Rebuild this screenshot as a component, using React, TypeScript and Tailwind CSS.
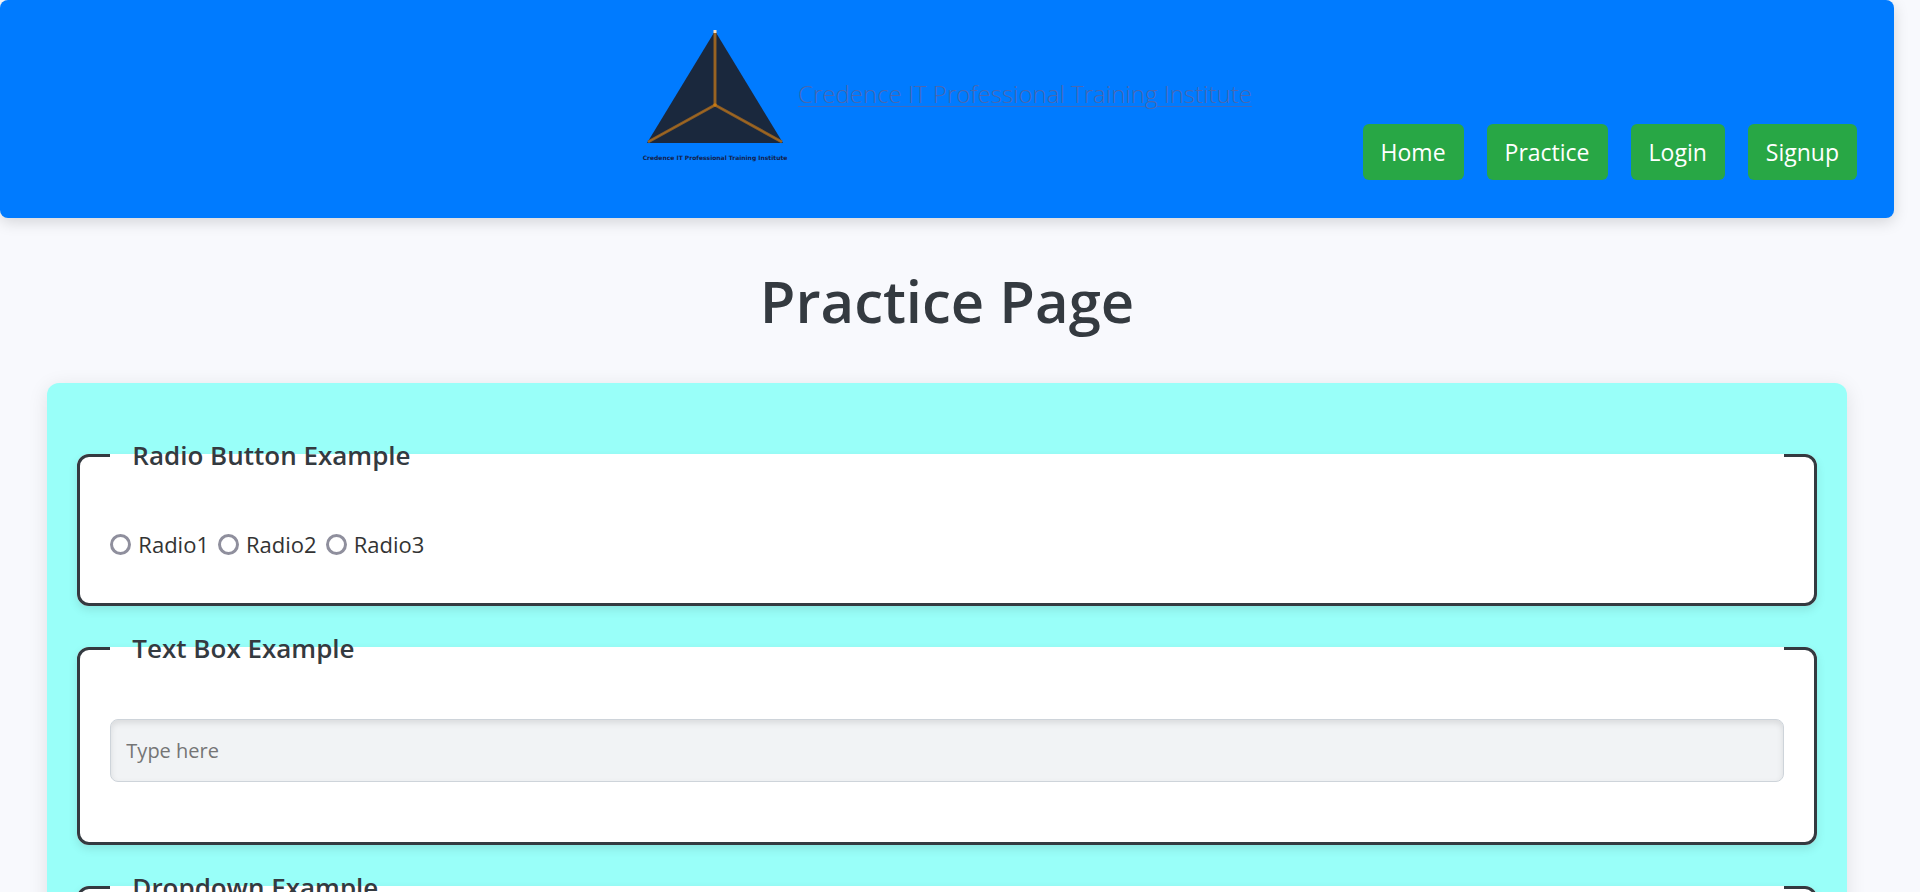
import type { ReactNode } from "react";

function Logo() {
  return (
    <svg viewBox="0 0 148 140" className="h-[140px] w-[148px] shrink-0" role="img" aria-label="Institute logo">
      <path d="M73 7 L141 119 H5 Z" fill="#1a283d" />
      <path d="M73 8 V81 M73 81 L6 118 M73 81 L140 118" fill="none" stroke="#8a5c26" strokeWidth="3" />
      <path d="M73 8 V81 M73 81 L6 118 M73 81 L140 118" fill="none" stroke="#a66a1f" strokeWidth="1" />
      <rect x="71.5" y="6" width="3" height="3" fill="#f7dfc4" />
      <circle cx="73" cy="81" r="1.8" fill="#c87a12" />
      <text
        x="73"
        y="136"
        textAnchor="middle"
        fill="#14204a"
        fontFamily="'DejaVu Sans', sans-serif"
        fontWeight="700"
        fontSize="6"
      >
        Credence IT Professional Training Institute
      </text>
    </svg>
  );
}

const navItems = ["Home", "Practice", "Login", "Signup"];

function Section({ title, children }: { title: string; children: ReactNode }) {
  return (
    <fieldset className="my-[22px] min-w-0 rounded-xl border-[3px] border-[#343a40] bg-white px-[30px] pt-[50px] pb-10 shadow-[0_4px_10px_rgba(0,0,0,0.1)]">
      <legend className="h-[41px] w-full px-[22px] text-[26px] leading-[41px] font-semibold text-[#343a40]">
        {title}
      </legend>
      {children}
    </fieldset>
  );
}

const fieldClass =
  "block h-[63px] w-full rounded-lg border border-[#ced4da] bg-[#f1f3f5] px-[15px] text-[20px] text-[#343a40] shadow-[inset_0_3px_6px_rgba(0,0,0,0.1)] placeholder:text-[#757575]";

export default function App() {
  return (
    <div className="min-h-screen bg-[#f8f9fd] pr-[26px] font-['Open_Sans',sans-serif] text-[#333]">
      <header className="grid grid-cols-[1fr_auto_1fr] rounded-lg bg-[#007bff] pt-6 pb-[38px] shadow-[0_4px_15px_rgba(0,0,0,0.15)]">
        <a href="#home" className="col-start-2 mb-4 flex items-center gap-2 text-[24px] font-light text-[#4a68b0]">
          <Logo />
          <span className="underline decoration-[#3f6bbf] decoration-1 underline-offset-[3px]">
            Credence IT Professional Training Institute
          </span>
        </a>
        <nav className="flex items-end justify-end gap-[23px] pr-[37px]">
          {navItems.map((item) => (
            <a
              key={item}
              href={"#" + item.toLowerCase()}
              className="flex h-14 items-center rounded-md bg-[#28a745] px-[18px] text-[23px] text-white"
            >
              {item}
            </a>
          ))}
        </nav>
      </header>

      <h1 className="py-[42px] text-center text-[58px] leading-[81px] font-semibold text-[#343a40]">Practice Page</h1>

      <main className="mx-auto flow-root w-[95%] rounded-xl bg-[#99fff9] p-[30px] shadow-[0_4px_20px_rgba(0,0,0,0.1)]">
        <Section title="Radio Button Example">
          <div className="mb-px flex h-9 items-center gap-[9px] text-[22px]">
            {["Radio1", "Radio2", "Radio3"].map((name) => (
              <label key={name} className="flex items-center gap-[7px]">
                <input
                  type="radio"
                  name="radio"
                  value={name}
                  className="size-[21px] appearance-none rounded-full border-[3px] border-[#8f8f9d] bg-white checked:border-[6px] checked:border-[#007bff]"
                />
                {name}
              </label>
            ))}
          </div>
        </Section>

        <Section title="Text Box Example">
          <input type="text" aria-label="Text Box Example" placeholder="Type here" className={fieldClass + " mb-5"} />
        </Section>

        <Section title="Dropdown Example">
          <select aria-label="Dropdown Example" className={fieldClass + " mb-5"}>
            <option>Select</option>
            <option>Option1</option>
            <option>Option2</option>
            <option>Option3</option>
          </select>
        </Section>
      </main>
    </div>
  );
}
